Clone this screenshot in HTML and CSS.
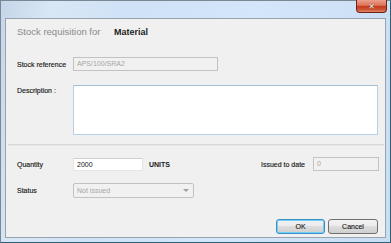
FILE: index.html
```html
<!DOCTYPE html>
<html lang="en">
<head>
    <meta charset="UTF-8">
    <title>Stock requisition</title>
    <link rel="stylesheet" href="styles.css">
</head>
<body>
    <div class="window">
        <div class="titlebar">
            <div class="close-btn"><span>&#x2715;</span></div>
        </div>
        <div class="client">
            <div class="section top">
                <div class="heading">
                    <span class="heading-label">Stock requisition for</span>
                    <span class="heading-value">Material</span>
                </div>
                <div class="row ref-row">
                    <label class="lbl">Stock reference</label>
                    <div class="field disabled ref-field">APS/100/SRA2</div>
                </div>
                <div class="row desc-row">
                    <label class="lbl">Description :</label>
                    <div class="field desc-field"></div>
                </div>
            </div>
            <div class="separator"></div>
            <div class="section bottom">
                <div class="row qty-row">
                    <label class="lbl">Quantity</label>
                    <div class="field qty-field">2000</div>
                    <span class="units">UNITS</span>
                    <div class="issued">
                        <label class="lbl-inline">Issued to date</label>
                        <div class="field disabled issued-field">0</div>
                    </div>
                </div>
                <div class="row status-row">
                    <label class="lbl">Status</label>
                    <div class="field disabled status-field">
                        <span>Not issued</span>
                        <svg class="arrow" width="6" height="4" viewBox="0 0 6 4"><path d="M0 0 L6 0 L3 3 Z" fill="#a0a0a0"/></svg>
                    </div>
                </div>
                <div class="buttons">
                    <div class="btn btn-default">OK</div>
                    <div class="btn">Cancel</div>
                </div>
            </div>
        </div>
    </div>
</body>
</html>
```

FILE: styles.css
```css
body {
    margin: 0;
    background: #ffffff;
}
* {
    box-sizing: border-box;
    font-family: "Liberation Sans", Arial, sans-serif;
}
.window {
    width: 391px;
    height: 243px;
    display: flex;
    flex-direction: column;
    border: 1px solid #7b8894;
    border-right-color: #2f5f74;
    border-bottom-color: #2f5f74;
    background: linear-gradient(100deg, #c4d6e8 0%, #d8e7f6 12%, #cfe2f6 30%, #d4e6f9 60%, #c9ddf3 100%);
}
.titlebar {
    height: 17px;
    display: flex;
    justify-content: flex-end;
    padding-right: 3px;
}
.close-btn {
    width: 31px;
    height: 13px;
    margin-top: -1px;
    border: 1px solid #6e2216;
    border-top: none;
    border-radius: 0 0 4px 4px;
    background: linear-gradient(#eba08c 0%, #dc7358 45%, #c53a1c 52%, #cf5536 80%, #e08a6a 100%);
    display: flex;
    align-items: center;
    justify-content: center;
}
.close-btn span {
    color: #f6ecea;
    font-size: 8px;
    font-weight: bold;
    font-family: "DejaVu Sans", sans-serif;
    text-shadow: 0 0 1px #4a120a;
}
.client {
    flex: 1;
    margin: 0 4px 4px 4px;
    border: 1px solid #97a3ae;
    background: #f0f0f0;
    display: flex;
    flex-direction: column;
}
.section {
    padding: 0 6px 0 11px;
}
.heading {
    margin-top: 7px;
    height: 12px;
    line-height: 12px;
    font-size: 9.5px;
    display: flex;
}
.heading-label {
    color: #8a8a8a;
    width: 97px;
}
.heading-value {
    color: #1e1e1e;
    font-weight: bold;
    font-size: 9px;
}
.row {
    display: flex;
    align-items: center;
}
.lbl {
    width: 56px;
    font-size: 7px;
    color: #1a1a1a;
    -webkit-text-stroke: 0.15px #1a1a1a;
}
.lbl-inline {
    font-size: 7px;
    color: #1a1a1a;
    -webkit-text-stroke: 0.15px #1a1a1a;
    margin-right: 8px;
}
.field {
    font-size: 7px;
    height: 14px;
    line-height: 12px;
    padding-left: 3px;
    border: 1px solid #b5b5b5;
    background: #ffffff;
    color: #111111;
}
.field.disabled {
    background: #f1f1f1;
    border-color: #c2c2c2;
    color: #a5a5a5;
}
.ref-row {
    margin-top: 19px;
}
.ref-field {
    width: 145px;
}
.desc-row {
    margin-top: 14px;
    align-items: flex-start;
}
.desc-row .lbl {
    margin-top: 2px;
}
.desc-field {
    width: 305px;
    height: 50px;
    border-color: #b7cfe6;
    border-top-color: #a3bcd6;
}
.separator {
    height: 2px;
    margin: 9px 1px 0 2px;
    background: #d8d8d8;
    border-bottom: 1px solid #e6e6e6;
}
.qty-row {
    margin-top: 11px;
}
.qty-field {
    width: 70px;
    height: 13px;
    line-height: 11px;
    border-color: #e4e4e4;
    border-top-color: #d0d0d0;
}
.units {
    font-size: 7px;
    margin-left: 6px;
    color: #1a1a1a;
    font-weight: bold;
}
.issued {
    margin-left: auto;
    display: flex;
    align-items: center;
}
.issued-field {
    width: 66px;
}
.status-row {
    margin-top: 12px;
}
.status-field {
    width: 121px;
    height: 15px;
    line-height: 13px;
    border-radius: 2px;
    display: flex;
    justify-content: space-between;
    align-items: center;
    padding-right: 4px;
    background: #f4f4f4;
}
.arrow {
    display: block;
}
.buttons {
    margin-top: 21px;
    display: flex;
    justify-content: flex-end;
    gap: 3px;
    padding-right: 1px;
}
.btn {
    width: 50px;
    height: 15px;
    border: 1px solid #707070;
    border-radius: 3px;
    background: linear-gradient(#f3f3f3 0%, #ebebeb 45%, #dddddd 50%, #cfcfcf 100%);
    font-size: 7px;
    line-height: 13px;
    text-align: center;
    color: #111111;
    -webkit-text-stroke: 0.1px #111111;
}
.btn-default {
    width: 49px;
    border-color: #3c8fc8;
    box-shadow: inset 0 0 0 1px #6fd0f5;
}
```
